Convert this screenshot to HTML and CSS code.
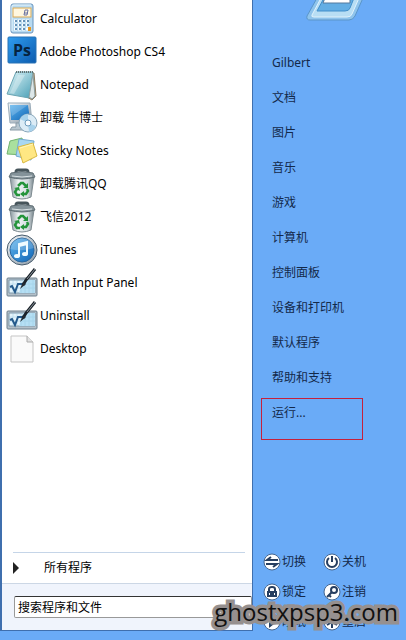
FILE: index.html
```html
<!DOCTYPE html>
<html lang="zh-CN">
<head>
<meta charset="utf-8">
<meta name="viewport" content="width=device-width">
<title>开始菜单</title>
<link rel="stylesheet" href="styles.css">
</head>
<body>
<svg class="defs" aria-hidden="true">
  <defs>
    <linearGradient id="silver" x2="1" y2="1"><stop stop-color="#f4f8fb"/><stop offset="1" stop-color="#8997a4"/></linearGradient>
    <linearGradient id="azure" x2="1" y2="1"><stop stop-color="#2f9df0"/><stop offset="1" stop-color="#0c5bae"/></linearGradient>
    <linearGradient id="page" x2="1" y2="1"><stop stop-color="#e4f7fa"/><stop offset="1" stop-color="#479eb5"/></linearGradient>
    <linearGradient id="screen" x2="1" y2="1"><stop stop-color="#5cb4ee"/><stop offset="1" stop-color="#1266b6"/></linearGradient>
    <linearGradient id="glass" x2="1" y2="1"><stop stop-color="#fff"/><stop offset=".5" stop-color="#eef8fd"/><stop offset="1" stop-color="#8ccdee"/></linearGradient>
    <linearGradient id="bin" x2="1"><stop stop-color="#8a989f"/><stop offset=".35" stop-color="#eef3f4"/><stop offset=".75" stop-color="#d2dade"/><stop offset="1" stop-color="#748289"/></linearGradient>
    <symbol id="trash" viewBox="0 0 32 32">
      <path d="M4 9h24l-3 20q-9 4-18 0z" fill="url(#bin)" stroke="#7e8b91"/>
      <path d="M10 7V4q0-2 2-2h8q2 0 2 2v3" fill="none" stroke="#46555b" stroke-width="3"/>
      <path d="M5 5q11-3 22 0l2 4q-13 4-26 0z" fill="#84939a" stroke="#5f6d73"/>
      <path d="M6 8q10 2 20 0" fill="none" stroke="#d9e2e5"/>
      <path d="M12 18l3-3h2l3 3M21 21l1 2-2 3h-3M14 27h-3l-2-3 2-3" fill="none" stroke="#24943b" stroke-width="2.5"/>
      <path d="M22 15v5h-5zM18 23v6l-4-3zM8 20l5-1 1 4z" fill="#24943b"/>
    </symbol>
    <symbol id="math" viewBox="0 0 32 32">
      <rect x="1" y="11" width="30" height="18" rx="1" fill="#b4c0c9" stroke="#6f808d"/>
      <path d="M3 13h26v13H3z" fill="#e3f3fb" stroke="#7f98aa"/>
      <path d="M17 13h12v13H13z" fill="#b5dff4"/>
      <path d="M3 17h26M3 21h26M7 13v13M11 13v13M15 13v13M19 13v13M23 13v13M27 13v13" stroke="#92c6df" opacity=".4"/>
      <path d="M4 20l2-1 3 6 3-8h5" fill="none" stroke="#23598b" stroke-width="2"/>
      <path d="M29 2l-9 11-3 5" fill="none" stroke="#1b2229" stroke-width="3"/>
      <path d="M29 2l-8 10" stroke="#8b969e"/>
      <path d="M17 15l-3 7 6-5z" fill="#222b32"/>
    </symbol>
  </defs>
</svg>
<main class="menu">
  <section class="programs">
    <ul class="apps">
      <li><a class="app" href="#"><svg class="icon" viewBox="0 0 32 32">
        <rect x="5" y="1" width="22" height="29" rx="2" fill="#b7daf1" stroke="#6794bd"/>
        <path d="M6 28V3q0-1 2-1h17" fill="none" stroke="#eaf6fc"/>
        <rect x="7" y="5" width="18" height="9" fill="#fff7df" stroke="#dba955"/>
        <path d="M22 7h-3l-1 5h3l1-5M18 10h4" fill="none" stroke="#6870a0"/>
        <path d="M8 18h16M8 22h16M8 26h16" stroke="#fff" stroke-width="3" stroke-dasharray="3 1"/>
        <path d="M9 18h15M9 22h15M9 26h11" stroke="#6892b7" stroke-width="2" stroke-dasharray="2 2"/>
        <path d="M22 24h3v4h-3z" fill="#e89722"/></svg><span>Calculator</span></a></li>
      <li><a class="app" href="#"><svg class="icon" viewBox="0 0 32 32"><rect x="2" y="1" width="28" height="26" rx="1" fill="url(#azure)" stroke="#2873b5"/><text class="ps" x="7" y="20">Ps</text></svg><span>Adobe Photoshop CS4</span></a></li>
      <li><a class="app" href="#"><svg class="icon" viewBox="0 0 32 32">
        <path d="M12 4h16l2 23-4 4-5-3z" fill="#c19352" stroke="#8d8069"/>
        <path d="M10 3h17l-4 26L1 25z" fill="url(#page)" stroke="#6aa4b2"/>
        <path d="M27 5l2 22-3 3-3-2z" fill="#dde7e8" stroke="#8da0a3"/>
        <path d="M10 3h18" stroke="#647476" stroke-width="2" stroke-dasharray="1 1"/>
        <path d="M4 24L12 6l7 0L8 25z" fill="#fff" opacity=".3"/></svg><span>Notepad</span></a></li>
      <li><a class="app" href="#"><svg class="icon" viewBox="0 0 32 32">
        <path d="M2 1h22l2 20H4z" fill="url(#silver)" stroke="#9bacb9"/>
        <path d="M4 3h18l2 15H5z" fill="url(#screen)"/><path d="M4 3h18L6 14z" fill="#fff" opacity=".2"/>
        <path d="M10 21h8l2 4h4v3H4l2-3h4z" fill="#b9c7d0" stroke="#8a9ba7"/>
        <circle cx="22" cy="21" r="9" fill="#dcecf6" stroke="#88a6ba"/><path d="M22 21l-8-4q3-5 8-5zM22 21l8 3q-2 5-7 6z" fill="#a8d2ec"/>
        <circle cx="22" cy="21" r="3" fill="#f8fcff" stroke="#6d9cbd"/></svg><span>卸载 牛博士</span></a></li>
      <li><a class="app" href="#"><svg class="icon" viewBox="0 0 32 32">
        <path d="M4 6l12-3 3 17-18-1z" fill="#a9e09e" stroke="#71b46f"/><path d="M13 4l15 2-3 19-15-4z" fill="#a8d7f2" stroke="#71a9cf"/>
        <path d="M12 12l15-4 4 13-14 7z" fill="#ffe783" stroke="#d9b940"/><path d="M14 13l13-4" stroke="#fff6bd"/></svg><span>Sticky Notes</span></a></li>
      <li><a class="app" href="#"><svg class="icon"><use href="#trash"/></svg><span>卸载腾讯QQ</span></a></li>
      <li><a class="app" href="#"><svg class="icon"><use href="#trash"/></svg><span>飞信2012</span></a></li>
      <li><a class="app" href="#"><svg class="icon" viewBox="0 0 32 32">
        <circle cx="16" cy="16" r="15" fill="url(#silver)" stroke="#465a6b"/><circle cx="16" cy="16" r="12" fill="url(#screen)" stroke="#28669e"/>
        <path d="M4 15q12 3 24-1Q26 4 16 4T4 15" fill="#fff" opacity=".2"/>
        <path d="M13 22V10l8-2v12M13 12l8-2" fill="none" stroke="#effbff" stroke-width="2"/><ellipse cx="11" cy="22" rx="3" ry="2" fill="#effbff"/><ellipse cx="19" cy="20" rx="3" ry="2" fill="#effbff"/></svg><span>iTunes</span></a></li>
      <li><a class="app" href="#"><svg class="icon"><use href="#math"/></svg><span>Math Input Panel</span></a></li>
      <li><a class="app" href="#"><svg class="icon"><use href="#math"/></svg><span>Uninstall</span></a></li>
      <li><a class="app" href="#"><svg class="icon" viewBox="0 0 32 32"><path d="M5 3h16l6 6v20H5z" fill="#fafafa" stroke="#c5c5c5"/><path d="M21 3v6h6" fill="#e2e2e2" stroke="#aaa"/></svg><span>Desktop</span></a></li>
    </ul>
    <button class="all" type="button"><svg class="arrow" viewBox="0 0 6 12"><path d="M0 0l6 6-6 6z" fill="#222"/></svg>所有程序</button>
    <form class="search"><input type="text" aria-label="搜索程序和文件" placeholder="搜索程序和文件"></form>
  </section>
  <aside class="side">
    <svg class="emblem" viewBox="0 0 60 22">
      <path d="M11-2L1 16q-1 4 3 4h39q4 0 6-4l8-18z" fill="#8fc4ec" stroke="#5a95c9"/>
      <path d="M15-2L6 15q-1 2 2 2h33q4 0 5-3l7-16z" fill="#b8def4" stroke="#e0f2fb"/>
      <path d="M18-2l-7 13h28q4 0 5-3l4-10z" fill="#63aee4" stroke="#438fca"/>
      <path d="M19-2l-2 5h27v-5z" fill="#fff" stroke="#557a9e"/></svg>
    <nav class="links">
      <a href="#">Gilbert</a><a href="#">文档</a><a href="#">图片</a><a href="#">音乐</a><a href="#">游戏</a><a href="#">计算机</a><a href="#">控制面板</a><a href="#">设备和打印机</a><a href="#">默认程序</a><a href="#">帮助和支持</a><a class="run" href="#">运行...</a>
    </nav>
    <div class="power">
      <button type="button"><svg viewBox="0 0 18 18"><circle cx="9" cy="9" r="8"/><path d="M15 7H4l4-3M3 11h11l-4 3"/></svg>切换</button>
      <button type="button"><svg viewBox="0 0 18 18"><circle cx="9" cy="9" r="8"/><path d="M6 5a5 5 0 1 0 6 0M9 3v6"/></svg>关机</button>
      <button type="button"><svg viewBox="0 0 18 18"><circle cx="9" cy="9" r="8"/><path d="M6 8V6q0-2 3-2t3 2v2M5 9h8v4h-3v-2H8v2H5z"/></svg>锁定</button>
      <button type="button"><svg viewBox="0 0 18 18"><circle cx="9" cy="9" r="8"/><circle class="key" cx="11" cy="7" r="3"/><path d="M9 9l-5 5M6 12l2 2"/></svg>注销</button>
      <button type="button"><svg viewBox="0 0 18 18"><circle cx="9" cy="9" r="8"/><path d="M7 5l5 4-5 4z"/></svg>睡眠</button>
      <button type="button"><svg viewBox="0 0 18 18"><circle cx="9" cy="9" r="8"/><path d="M9 3v12M4 6l10 6M14 6L4 12"/></svg>重启</button>
    </div>
  </aside>
  <div class="watermark">ghostxpsp3.com</div>
</main>
</body>
</html>
```
FILE: styles.css
```css
* { box-sizing: border-box; }
body { margin: 0; background: #6aabf7; font: 12px/20px "Noto Sans", "Noto Sans CJK SC", sans-serif; color: #000; }
a { color: inherit; text-decoration: none; }
button { padding: 0; border: 0; background: none; color: inherit; font: inherit; }
.defs { position: absolute; width: 0; height: 0; }
.menu { position: relative; display: grid; grid-template-columns: 253fr 153fr; height: 100vh; overflow: hidden; }
.programs { display: flex; flex-direction: column; margin-bottom: 9px; border: solid #3f6fae; border-width: 0 1px 1px 2px; background: #fff; }
.apps { flex: 1; margin: 0; padding: 2px 4px; list-style: none; }
.app { display: flex; align-items: center; gap: 2px; height: 33px; }
.icon { width: 32px; height: 32px; }
.ps { font: bold 16px "Open Sans", sans-serif; fill: #06233f; }
.all { display: flex; align-items: center; gap: 25px; height: 31px; margin: 0 7px 0 11px; border-top: 1px solid #c5d5e8; text-align: left; }
.arrow { width: 6px; height: 12px; }
.search { padding: 12px 0 12px 12px; border-top: 1px solid #ccd7e5; background: #f0f4fc; }
.search input { display: block; width: 100%; height: 22px; padding: 0 3px; border: 1px solid #999; border-top-color: #333; border-radius: 2px; background: #fff; font: inherit; }
.search input::placeholder { color: #000; opacity: 1; }
.side { display: flex; flex-direction: column; color: #13294a; }
.emblem { width: 60px; height: 22px; margin-left: 53px; }
.links { display: flex; flex-direction: column; flex: 1; padding: 24px 8px 0; }
.links a { height: 35px; padding: 7px 11px; }
.links .run { width: 102px; height: 42px; margin-top: 2px; padding: 4px 10px; border: 1px solid #c5203c; }
.power { display: grid; grid-template-columns: 60px 60px; grid-auto-rows: 30px; padding: 0 0 3px 10px; }
.power button { display: flex; align-items: center; gap: 1px; }
.power svg { width: 18px; height: 18px; fill: none; stroke: #263e60; stroke-width: 2; }
.power circle { fill: #fff; stroke: #46668f; stroke-width: 1; }
.power .key { stroke: #263e60; stroke-width: 2; }
.watermark { position: absolute; right: 8px; bottom: 10px; color: #111; font: 24px/36px "Open Sans", sans-serif; -webkit-text-stroke: 7px #96908f; paint-order: stroke fill; }
```
